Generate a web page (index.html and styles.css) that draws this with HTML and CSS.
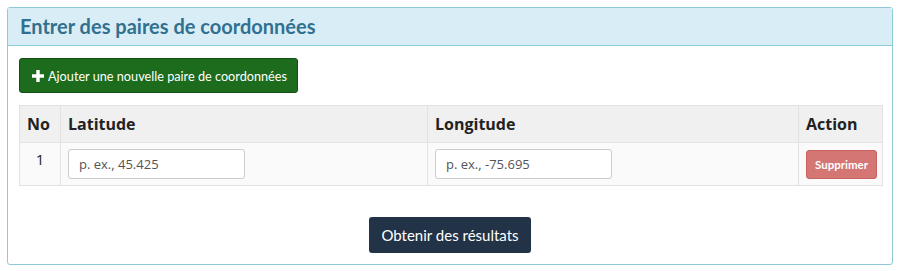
FILE: index.html
```html
<!DOCTYPE html>
<html lang="fr">
<head>
  <meta charset="UTF-8" />
  <title>Paires de coordonnées</title>
  <link rel="stylesheet" href="styles.css">
</head>
<body>

  <div class="panel">
    <div class="panel-heading">Entrer des paires de coordonnées</div>
    <div class="panel-body">
      <button class="btn-add"><span class="plus">
        <svg width="12" height="12" viewBox="0 0 12 12"><path d="M4.3 0h3.4v4.3H12v3.4H7.7V12H4.3V7.7H0V4.3h4.3z" fill="#fff"/></svg>
      </span>Ajouter une nouvelle paire de coordonnées</button>

      <table class="coords">
        <thead>
          <tr>
            <th class="col-no">No</th>
            <th class="col-lat">Latitude</th>
            <th class="col-lon">Longitude</th>
            <th class="col-act">Action</th>
          </tr>
        </thead>
        <tbody>
          <tr>
            <td class="num">1</td>
            <td><input type="text" placeholder="p. ex., 45.425"></td>
            <td><input type="text" placeholder="p. ex., -75.695"></td>
            <td><button class="btn-del">Supprimer</button></td>
          </tr>
        </tbody>
      </table>

      <div class="actions">
        <button class="btn-submit">Obtenir des résultats</button>
      </div>
    </div>
  </div>

</body>
</html>
```

FILE: styles.css
```css
body {
  margin: 7px;
  background: #fff;
  font-family: "Open Sans", sans-serif;
}
.panel {
  border: 1px solid #8ecbd6;
  border-radius: 3px;
}
.panel-heading {
  background: #d9edf7;
  border-bottom: 1px solid #8ecbd6;
  color: #31708f;
  font-family: Lato, sans-serif;
  font-weight: bold;
  font-size: 20px;
  height: 37px;
  line-height: 37px;
  padding: 0 12px;
}
.panel-body {
  padding: 12px 11px 11px;
}
button {
  font-family: Lato, sans-serif;
  cursor: pointer;
  border: none;
}
.btn-add {
  display: flex;
  align-items: center;
  height: 35px;
  padding: 0 10px 0 12px;
  background: #1d6b1d;
  border: 1px solid #134f13;
  border-radius: 3px;
  color: #fff;
  font-size: 12.7px;
}
.plus {
  display: flex;
  margin-right: 4px;
}
.coords {
  width: 100%;
  margin-top: 12px;
  border-collapse: collapse;
  table-layout: fixed;
  font-size: 16px;
  color: #222;
}
.coords th,
.coords td {
  border: 1px solid #e2e2e2;
  text-align: left;
}
.coords th {
  background: #f0f0f0;
  font-weight: bold;
  height: 36px;
  padding: 0 7px;
}
.coords td {
  background: #fafafa;
  padding: 6px 7px;
  vertical-align: middle;
}
.col-no { width: 26px; }
.col-lat { width: 352px; }
.col-lon { width: 356px; }
.col-act { width: 69px; }
.coords td.num {
  text-align: center;
  vertical-align: top;
  padding-top: 6px;
  font-size: 15px;
  line-height: 20px;
}
input {
  display: block;
  width: 177px;
  height: 30px;
  box-sizing: border-box;
  border: 1px solid #ccc;
  border-radius: 3px;
  padding: 0 10px;
  font-family: "Open Sans", sans-serif;
  font-size: 13px;
  background: #fff;
}
input::placeholder {
  color: #555;
}
.btn-del {
  display: block;
  height: 29px;
  padding: 0 8px;
  background: #d47674;
  border: 1px solid #c9615f;
  border-radius: 3px;
  color: #fff;
  font-size: 11.5px;
  font-weight: bold;
}
.actions {
  display: flex;
  justify-content: center;
  margin-top: 31px;
}
.btn-submit {
  height: 36px;
  padding: 0 12px;
  background: #233347;
  border-radius: 3px;
  color: #fff;
  font-size: 15px;
}
```
